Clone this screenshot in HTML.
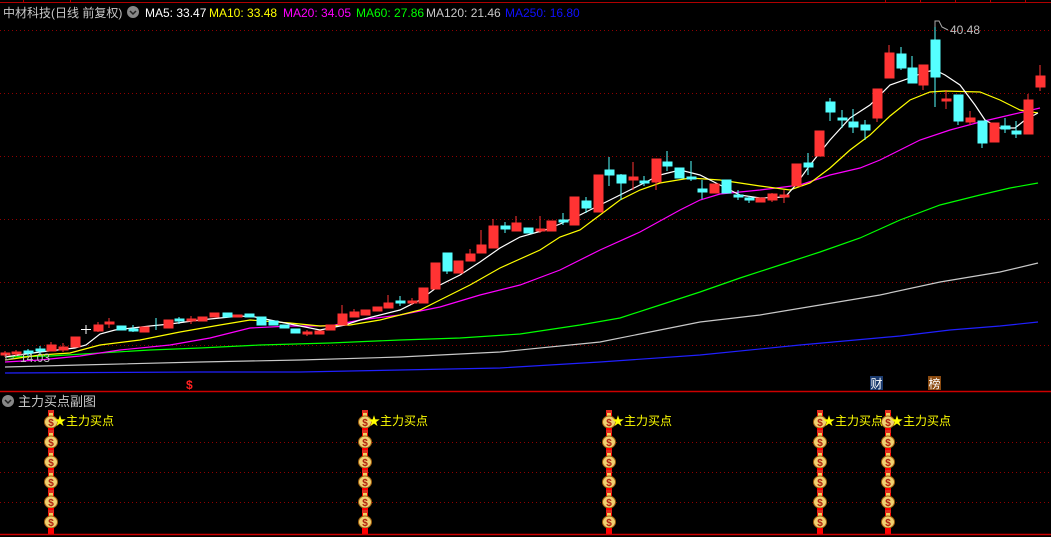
<!DOCTYPE html>
<html><head><meta charset="utf-8"><style>
html,body{margin:0;padding:0;background:#000;width:1051px;height:537px;overflow:hidden}
svg{display:block}
text{font-family:"Liberation Sans","Noto Sans CJK SC",sans-serif}
</style></head><body>
<svg width="1051" height="537" viewBox="0 0 1051 537" xmlns="http://www.w3.org/2000/svg">
<defs>
<g id="bag">
<rect x="-3" y="-12" width="6" height="3" fill="#e03020"/>
<rect x="-2" y="-9" width="4" height="3" fill="#f0d060"/>
<ellipse cx="0" cy="0" rx="6.5" ry="6" fill="#f0d070" stroke="#a06010" stroke-width="1"/>
<text x="0" y="4" font-size="10" font-weight="bold" fill="#b02010" text-anchor="middle">$</text>
<rect x="-3" y="6" width="6" height="6" fill="#ff0000"/>
</g>
</defs>
<line x1="0" y1="2.5" x2="1051" y2="2.5" stroke="#b00000" stroke-width="1"/>
<g stroke="#b00000" stroke-width="1">
<line x1="23.5" y1="0" x2="23.5" y2="3"/><line x1="70.5" y1="0" x2="70.5" y2="3"/>
<line x1="885.5" y1="0" x2="885.5" y2="3"/><line x1="920.5" y1="0" x2="920.5" y2="3"/><line x1="955.5" y1="0" x2="955.5" y2="3"/><line x1="990.5" y1="0" x2="990.5" y2="3"/><line x1="1025.5" y1="0" x2="1025.5" y2="3"/>
</g>
<g stroke="#900000" stroke-width="1" stroke-dasharray="1,3">
<line x1="0" y1="30.5" x2="1051" y2="30.5"/><line x1="0" y1="93.5" x2="1051" y2="93.5"/>
<line x1="0" y1="156.5" x2="1051" y2="156.5"/><line x1="0" y1="219.5" x2="1051" y2="219.5"/>
<line x1="0" y1="282.5" x2="1051" y2="282.5"/><line x1="0" y1="345.5" x2="1051" y2="345.5"/>
<line x1="0" y1="442.5" x2="1051" y2="442.5"/><line x1="0" y1="472.5" x2="1051" y2="472.5"/><line x1="0" y1="502.5" x2="1051" y2="502.5"/>
</g>
<text x="3" y="17" font-size="12" fill="#c8c8c8">中材科技(日线 前复权)</text>
<circle cx="133" cy="12" r="6" fill="#888"/><path d="M130 11 L133 14 L136 11" stroke="#222" stroke-width="1.5" fill="none"/>
<text y="17" font-size="12"><tspan x="145" fill="#ffffff">MA5: 33.47</tspan><tspan x="209" fill="#ffff00">MA10: 33.48</tspan><tspan x="283" fill="#ff00ff">MA20: 34.05</tspan><tspan x="356" fill="#00ff00">MA60: 27.86</tspan><tspan x="426" fill="#c8c8c8">MA120: 21.46</tspan><tspan x="505" fill="#1010ff">MA250: 16.80</tspan></text>
<g fill="none" stroke-width="1.2">
<polyline stroke="#2020ff" points="5,373 200,372 300,372 400,370 500,368 600,362 700,355 800,345 900,336 950,330 1000,326 1038,322"/>
<polyline stroke="#c8c8c8" points="5,367 80,365 200,362 300,360 400,357 500,352 600,342 660,330 700,322 760,315 820,305 880,295 940,282 1000,272 1038,263"/>
<polyline stroke="#00ff00" points="5,357 50,356 100,353 150,350 200,348 260,345 330,343 400,340 460,338 520,334 580,325 620,318 660,305 700,292 740,278 780,265 820,252 860,238 900,220 940,205 980,195 1010,188 1038,183"/>
<polyline stroke="#ff00ff" points="5,362 40,360 80,356 120,350 170,345 210,338 250,328 290,326 330,326 360,320 400,315 440,307 480,295 520,285 560,270 600,250 640,232 680,210 700,200 720,194 760,190 800,185 830,175 860,168 880,160 900,150 920,140 950,130 980,122 1010,115 1040,108"/>
<polyline stroke="#ffff00" points="5,360 40,355 70,353 100,345 140,340 180,332 220,325 250,320 290,323 320,326 350,325 380,320 420,310 440,300 470,285 500,268 540,250 560,237 580,230 600,215 620,200 640,190 660,183 690,178 720,180 760,186 790,190 810,183 830,168 850,150 870,135 890,116 910,100 930,92 945,91 980,92 1000,100 1020,110 1038,113"/>
<polyline stroke="#ffffff" points="5,357 40,352 75,348 86,345 100,334 115,330 150,326 170,324 200,320 240,316 255,317 270,320 290,324 320,330 345,325 360,320 380,315 400,310 420,300 440,285 460,275 480,262 500,248 520,237 545,230 560,224 580,215 600,205 620,195 640,185 660,175 680,170 700,175 720,185 740,195 760,198 785,197 795,186 810,165 830,140 850,118 870,105 890,85 910,78 925,72 935,70 945,75 960,85 975,105 985,120 1000,128 1015,128 1025,120 1038,113"/>
</g>
<g stroke-width="1">
<g fill="#ff3333" stroke="#ff3333">
<line x1="5" y1="351" x2="5" y2="357"/><rect x="1" y="353" width="9" height="2"/>
<line x1="16" y1="350" x2="16" y2="356"/><rect x="12" y="352" width="9" height="2"/>
<line x1="51" y1="342" x2="51" y2="351"/><rect x="47" y="345" width="9" height="6"/>
<line x1="63" y1="343" x2="63" y2="352"/><rect x="59" y="347" width="9" height="3"/>
<rect x="71" y="337" width="9" height="10"/>
<line x1="98" y1="322" x2="98" y2="332"/><rect x="94" y="325" width="9" height="6"/>
<line x1="109" y1="318" x2="109" y2="328"/><rect x="105" y="322" width="9" height="2"/>
<rect x="140" y="327" width="9" height="5"/>
<rect x="164" y="320" width="9" height="8"/>
<line x1="191" y1="316" x2="191" y2="324"/><rect x="187" y="319" width="9" height="2"/>
<rect x="198" y="317" width="9" height="4"/><rect x="210" y="313" width="9" height="4"/>
<rect x="233" y="315" width="9" height="2"/>
<line x1="307" y1="330" x2="307" y2="336"/><rect x="303" y="332" width="9" height="2"/>
<rect x="315" y="331" width="9" height="3"/><rect x="326" y="325" width="9" height="5"/>
<line x1="342" y1="305" x2="342" y2="325"/><rect x="338" y="314" width="9" height="11"/>
<line x1="354" y1="309" x2="354" y2="317"/><rect x="350" y="312" width="9" height="5"/>
<rect x="361" y="310" width="9" height="5"/><rect x="373" y="307" width="9" height="4"/>
<line x1="388" y1="295" x2="388" y2="308"/><rect x="384" y="303" width="9" height="5"/>
<line x1="412" y1="298" x2="412" y2="305"/><rect x="408" y="301" width="9" height="2"/>
<rect x="419" y="288" width="9" height="15"/><rect x="431" y="263" width="9" height="26"/>
<rect x="454" y="261" width="9" height="12"/>
<line x1="470" y1="249" x2="470" y2="261"/><rect x="466" y="254" width="9" height="7"/>
<line x1="481" y1="230" x2="481" y2="253"/><rect x="477" y="245" width="9" height="8"/>
<line x1="493" y1="219" x2="493" y2="248"/><rect x="489" y="226" width="9" height="22"/>
<line x1="516" y1="216" x2="516" y2="231"/><rect x="512" y="223" width="9" height="8"/>
<line x1="540" y1="216" x2="540" y2="233"/><rect x="536" y="229" width="9" height="2"/>
<rect x="547" y="221" width="9" height="10"/><rect x="570" y="197" width="9" height="28"/>
<rect x="594" y="175" width="9" height="37"/>
<line x1="633" y1="162" x2="633" y2="190"/><rect x="629" y="177" width="9" height="3"/>
<line x1="656" y1="159" x2="656" y2="190"/><rect x="652" y="159" width="9" height="23"/>
<rect x="710" y="184" width="9" height="9"/>
<rect x="756" y="198" width="9" height="4"/>
<line x1="772" y1="193" x2="772" y2="202"/><rect x="768" y="194" width="9" height="6"/>
<line x1="784" y1="190" x2="784" y2="203"/><rect x="780" y="195" width="9" height="2"/>
<rect x="792" y="164" width="9" height="22"/>
<rect x="815" y="131" width="9" height="25"/>
<line x1="877" y1="89" x2="877" y2="122"/><rect x="873" y="89" width="9" height="29"/>
<line x1="889" y1="45" x2="889" y2="78"/><rect x="885" y="53" width="9" height="25"/>
<line x1="923" y1="65" x2="923" y2="90"/><rect x="919" y="65" width="9" height="20"/>
<line x1="946" y1="90" x2="946" y2="109"/><rect x="942" y="99" width="9" height="2"/>
<line x1="970" y1="111" x2="970" y2="125"/><rect x="966" y="118" width="9" height="4"/>
<rect x="990" y="123" width="9" height="19"/>
<line x1="1028" y1="94" x2="1028" y2="134"/><rect x="1024" y="100" width="9" height="34"/>
<line x1="1040" y1="65" x2="1040" y2="91"/><rect x="1036" y="76" width="9" height="11"/>
</g>
<g fill="#55ffff" stroke="#55ffff">
<line x1="28" y1="349" x2="28" y2="356"/><rect x="24" y="351" width="9" height="2"/>
<line x1="40" y1="346" x2="40" y2="354"/><rect x="36" y="349" width="9" height="2"/>
<rect x="117" y="326" width="9" height="4"/>
<line x1="133" y1="325" x2="133" y2="332"/><rect x="129" y="329" width="9" height="2"/>
<line x1="156" y1="318" x2="156" y2="330"/>
<line x1="179" y1="317" x2="179" y2="324"/><rect x="175" y="319" width="9" height="2"/>
<rect x="223" y="313" width="9" height="4"/><rect x="245" y="314" width="9" height="3"/>
<rect x="257" y="317" width="9" height="8"/><rect x="269" y="321" width="9" height="4"/>
<rect x="280" y="325" width="9" height="3"/><rect x="291" y="329" width="9" height="4"/>
<line x1="400" y1="296" x2="400" y2="306"/><rect x="396" y="301" width="9" height="2"/>
<line x1="447" y1="253" x2="447" y2="274"/><rect x="443" y="253" width="9" height="18"/>
<line x1="505" y1="222" x2="505" y2="233"/><rect x="501" y="226" width="9" height="3"/>
<rect x="524" y="228" width="9" height="5"/>
<line x1="563" y1="213" x2="563" y2="225"/><rect x="559" y="220" width="9" height="2"/>
<line x1="586" y1="197" x2="586" y2="213"/><rect x="582" y="201" width="9" height="7"/>
<line x1="609" y1="157" x2="609" y2="186"/><rect x="605" y="170" width="9" height="5"/>
<line x1="621" y1="174" x2="621" y2="200"/><rect x="617" y="175" width="9" height="8"/>
<line x1="644" y1="176" x2="644" y2="186"/><rect x="640" y="181" width="9" height="2"/>
<line x1="667" y1="151" x2="667" y2="171"/><rect x="663" y="162" width="9" height="4"/>
<rect x="675" y="168" width="9" height="10"/>
<line x1="691" y1="161" x2="691" y2="181"/><rect x="687" y="177" width="9" height="2"/>
<line x1="702" y1="180" x2="702" y2="199"/><rect x="698" y="189" width="9" height="3"/>
<rect x="722" y="180" width="9" height="13"/>
<line x1="738" y1="190" x2="738" y2="200"/><rect x="734" y="195" width="9" height="2"/>
<line x1="749" y1="196" x2="749" y2="203"/><rect x="745" y="198" width="9" height="2"/>
<line x1="808" y1="153" x2="808" y2="175"/><rect x="804" y="163" width="9" height="4"/>
<line x1="830" y1="98" x2="830" y2="121"/><rect x="826" y="102" width="9" height="10"/>
<line x1="842" y1="110" x2="842" y2="128"/><rect x="838" y="118" width="9" height="2"/>
<line x1="853" y1="109" x2="853" y2="133"/><rect x="849" y="122" width="9" height="5"/>
<line x1="865" y1="120" x2="865" y2="140"/><rect x="861" y="125" width="9" height="5"/>
<line x1="901" y1="47" x2="901" y2="70"/><rect x="897" y="54" width="9" height="14"/>
<line x1="912" y1="56" x2="912" y2="83"/><rect x="908" y="68" width="9" height="15"/>
<line x1="935" y1="27" x2="935" y2="107"/><rect x="931" y="40" width="9" height="37"/>
<line x1="958" y1="95" x2="958" y2="125"/><rect x="954" y="95" width="9" height="26"/>
<line x1="982" y1="121" x2="982" y2="148"/><rect x="978" y="121" width="9" height="22"/>
<line x1="1005" y1="118" x2="1005" y2="133"/><rect x="1001" y="126" width="9" height="3"/>
<line x1="1016" y1="121" x2="1016" y2="138"/><rect x="1012" y="131" width="9" height="3"/>
</g>
<g stroke="#ffffff"><line x1="86" y1="325" x2="86" y2="334"/><line x1="81" y1="329.5" x2="91" y2="329.5"/></g>
</g>
<path d="M935 27 L935 21 L939 21 L942 27 L948 30" stroke="#aaa" fill="none"/>
<text x="950" y="34" font-size="12" fill="#c0c0c0">40.48</text>
<path d="M6 354 L6 360 L14 358" stroke="#aaa" fill="none"/>
<text x="20" y="362" font-size="12" fill="#c0c0c0">14.03</text>
<text x="186" y="389" font-size="12" font-weight="bold" fill="#ff2020">$</text>
<rect x="870" y="376" width="13" height="14" fill="#1a3a6e"/><text x="870.5" y="388" font-size="12" fill="#fff">财</text>
<rect x="928" y="376" width="13" height="14" fill="#8a4a10"/><text x="928.5" y="388" font-size="12" fill="#fff">榜</text>
<line x1="0" y1="391.5" x2="1051" y2="391.5" stroke="#cc0000" stroke-width="1.5"/>
<circle cx="8" cy="401" r="6" fill="#888"/><path d="M5 400 L8 403 L11 400" stroke="#222" stroke-width="1.5" fill="none"/>
<text x="18" y="406" font-size="13" fill="#c8c8c8">主力买点副图</text>
<g font-size="12" fill="#ffff00">
<g transform="translate(51,0)"><rect x="-3" y="412" width="6" height="121" fill="#ff0000"/><use href="#bag" y="422"/><use href="#bag" y="442"/><use href="#bag" y="462"/><use href="#bag" y="482"/><use href="#bag" y="502"/><use href="#bag" y="522"/></g>
<text x="54" y="425">★主力买点</text>
<g transform="translate(365,0)"><rect x="-3" y="412" width="6" height="121" fill="#ff0000"/><use href="#bag" y="422"/><use href="#bag" y="442"/><use href="#bag" y="462"/><use href="#bag" y="482"/><use href="#bag" y="502"/><use href="#bag" y="522"/></g>
<text x="368" y="425">★主力买点</text>
<g transform="translate(609,0)"><rect x="-3" y="412" width="6" height="121" fill="#ff0000"/><use href="#bag" y="422"/><use href="#bag" y="442"/><use href="#bag" y="462"/><use href="#bag" y="482"/><use href="#bag" y="502"/><use href="#bag" y="522"/></g>
<text x="612" y="425">★主力买点</text>
<g transform="translate(820,0)"><rect x="-3" y="412" width="6" height="121" fill="#ff0000"/><use href="#bag" y="422"/><use href="#bag" y="442"/><use href="#bag" y="462"/><use href="#bag" y="482"/><use href="#bag" y="502"/><use href="#bag" y="522"/></g>
<text x="823" y="425">★主力买点</text>
<g transform="translate(888,0)"><rect x="-3" y="412" width="6" height="121" fill="#ff0000"/><use href="#bag" y="422"/><use href="#bag" y="442"/><use href="#bag" y="462"/><use href="#bag" y="482"/><use href="#bag" y="502"/><use href="#bag" y="522"/></g>
<text x="891" y="425">★主力买点</text>
</g>
<line x1="0" y1="534.5" x2="1051" y2="534.5" stroke="#cc0000" stroke-width="1.5"/>
</svg>
</body></html>
